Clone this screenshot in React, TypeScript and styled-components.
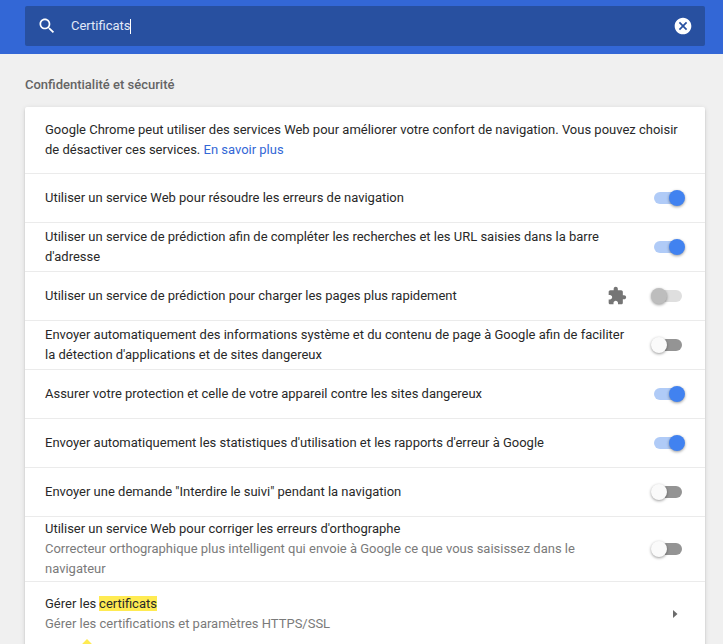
import React from "react";
import styled, { createGlobalStyle, css } from "styled-components";

const GlobalStyle = createGlobalStyle`
  html, body { margin: 0; height: 644px; overflow: hidden; }
  body {
    background: #f0f0f0;
    color: #282828;
    font: 12.995px/20px Roboto, "Liberation Sans", sans-serif;
  }
`;

const Page = styled.div`
  height: 644px;
  overflow: hidden;
`;

const Toolbar = styled.header`
  box-sizing: border-box;
  height: 54px;
  padding: 6px 18px 8px 25px;
  background: #3367d6;
`;

const SearchBox = styled.div`
  display: flex;
  align-items: center;
  box-sizing: border-box;
  height: 40px;
  padding: 0 12px;
  border-radius: 2px;
  background: #2850a0;
  color: #e1e9f8;
`;

const SearchIcon = styled.svg`
  width: 20px;
  height: 20px;
  fill: #fff;
  flex: none;
`;

const Query = styled.span`
  flex: 1;
  display: flex;
  align-items: center;
  margin-left: 14px;
`;

const Caret = styled.span`
  width: 1px;
  height: 15px;
  margin-left: -0.4px;
  background: #fff;
`;

const Heading = styled.h2`
  margin: 21px 0 12px 25px;
  font-size: 13px;
  line-height: 20px;
  font-weight: 500;
  color: #646464;
`;

const Card = styled.section`
  margin: 0 18px 0 25px;
  height: 560px;
  border-radius: 2px;
  background: #fff;
  box-shadow: 0 2px 2px 0 rgba(0, 0, 0, 0.14), 0 1px 5px 0 rgba(0, 0, 0, 0.12),
    0 3px 1px -2px rgba(0, 0, 0, 0.2);
`;

const Intro = styled.p`
  margin: 0;
  padding: 13px 20px;
`;

const Link = styled.a`
  color: #3367d6;
  text-decoration: none;
`;

const Row = styled.div`
  display: flex;
  align-items: center;
  box-sizing: border-box;
  min-height: 49px;
  padding: 0 20px;
  border-top: 1px solid #ebebeb;
`;

const LinkRow = styled(Row)`
  height: 65px;
`;

const Label = styled.div`
  flex: 1;
  margin: 4px 0;
  max-width: 582px;
`;

const TallLabel = styled(Label)`
  margin: 2px 0;
`;

const Secondary = styled.div`
  color: #7a7a7a;
`;

const Mark = styled.mark`
  position: relative;
  margin-left: -0.4px;
  background: #ffeb52;
  color: inherit;
`;

const BubbleTip = styled.span`
  position: absolute;
  left: -19.5px;
  top: 45.5px;
  width: 14px;
  height: 14px;
  transform: rotate(45deg);
  background: #ffeb52;
`;

const PolicyIcon = styled.svg`
  width: 20px;
  height: 20px;
  margin-right: 27px;
  fill: #757575;
`;

type ToggleState = "on" | "off" | "disabled";

const Track = styled.span<{ $state: ToggleState }>`
  position: relative;
  flex: none;
  width: 28px;
  height: 12px;
  margin: 0 3px 0 auto;
  border-radius: 6px;
  background: ${(p) => ({ on: "#b0cbf7", off: "#949494", disabled: "#dfdfdf" })[p.$state]};
`;

const Knob = styled.span<{ $state: ToggleState }>`
  position: absolute;
  top: -2px;
  left: -3px;
  width: 16px;
  height: 16px;
  border-radius: 50%;
  background: ${(p) => ({ on: "#4182f0", off: "#fafafa", disabled: "#bdbdbd" })[p.$state]};
  box-shadow: 0 1px 3px 0 rgba(0, 0, 0, 0.4);
  ${(p) => p.$state === "on" && css`left: 15px;`}
`;

const Arrow = styled.svg`
  width: 5px;
  height: 8px;
  margin: 0 7px 0 auto;
  fill: #6b6b6b;
`;

function Toggle({ state }: { state: ToggleState }) {
  return (
    <Track $state={state}>
      <Knob $state={state} />
    </Track>
  );
}

interface Setting {
  label: string;
  state: ToggleState;
}

const settings: Setting[] = [
  { label: "Utiliser un service Web pour résoudre les erreurs de navigation", state: "on" },
  {
    label:
      "Utiliser un service de prédiction afin de compléter les recherches et les URL saisies dans la barre d'adresse",
    state: "on",
  },
  { label: "Utiliser un service de prédiction pour charger les pages plus rapidement", state: "disabled" },
  {
    label:
      "Envoyer automatiquement des informations système et du contenu de page à Google afin de faciliter la détection d'applications et de sites dangereux",
    state: "off",
  },
  { label: "Assurer votre protection et celle de votre appareil contre les sites dangereux", state: "on" },
  {
    label: "Envoyer automatiquement les statistiques d'utilisation et les rapports d'erreur à Google",
    state: "on",
  },
  { label: 'Envoyer une demande "Interdire le suivi" pendant la navigation', state: "off" },
];

export default function App() {
  return (
    <Page>
      <GlobalStyle />
      <Toolbar>
        <SearchBox>
          <SearchIcon viewBox="0 0 24 24">
            <path d="M15.5 14h-.79l-.28-.27C15.41 12.59 16 11.11 16 9.5 16 5.91 13.09 3 9.5 3S3 5.91 3 9.5 5.91 16 9.5 16c1.61 0 3.09-.59 4.23-1.57l.27.28v.79l5 4.99L20.49 19l-4.99-5zm-6 0C7.01 14 5 11.99 5 9.5S7.01 5 9.5 5 14 7.01 14 9.5 11.99 14 9.5 14z" />
          </SearchIcon>
          <Query>
            Certificats
            <Caret />
          </Query>
          <SearchIcon viewBox="0 0 24 24">
            <path d="M12 2C6.47 2 2 6.47 2 12s4.47 10 10 10 10-4.47 10-10S17.53 2 12 2zm5 13.59L15.59 17 12 13.41 8.41 17 7 15.59 10.59 12 7 8.41 8.41 7 12 10.59 15.59 7 17 8.41 13.41 12 17 15.59z" />
          </SearchIcon>
        </SearchBox>
      </Toolbar>
      <Heading>Confidentialité et sécurité</Heading>
      <Card>
        <Intro>
          Google Chrome peut utiliser des services Web pour améliorer votre confort de navigation. Vous pouvez choisir
          de désactiver ces services. <Link>En savoir plus</Link>
        </Intro>
        {settings.map(({ label, state }) => (
          <Row key={label}>
            <Label>{label}</Label>
            {state === "disabled" && (
              <PolicyIcon viewBox="0 0 24 24">
                <path d="M20.5 11H19V7c0-1.1-.9-2-2-2h-4V3.5C13 2.12 11.88 1 10.5 1S8 2.12 8 3.5V5H4c-1.1 0-1.99.9-1.99 2v3.8H3.5c1.49 0 2.7 1.21 2.7 2.7s-1.21 2.7-2.7 2.7H2V20c0 1.1.9 2 2 2h3.8v-1.5c0-1.49 1.21-2.7 2.7-2.7 1.49 0 2.7 1.21 2.7 2.7V22H17c1.1 0 2-.9 2-2v-4h1.5c1.38 0 2.5-1.12 2.5-2.5S21.88 11 20.5 11z" />
              </PolicyIcon>
            )}
            <Toggle state={state} />
          </Row>
        ))}
        <Row>
          <TallLabel>
            Utiliser un service Web pour corriger les erreurs d'orthographe
            <Secondary>
              Correcteur orthographique plus intelligent qui envoie à Google ce que vous saisissez dans le navigateur
            </Secondary>
          </TallLabel>
          <Toggle state="off" />
        </Row>
        <LinkRow>
          <Label>
            Gérer les{" "}
            <Mark>
              certificats
              <BubbleTip />
            </Mark>
            <Secondary>Gérer les certifications et paramètres HTTPS/SSL</Secondary>
          </Label>
          <Arrow viewBox="0 0 5 8">
            <path d="M0 0l4.5 4-4.5 4z" />
          </Arrow>
        </LinkRow>
      </Card>
    </Page>
  );
}
